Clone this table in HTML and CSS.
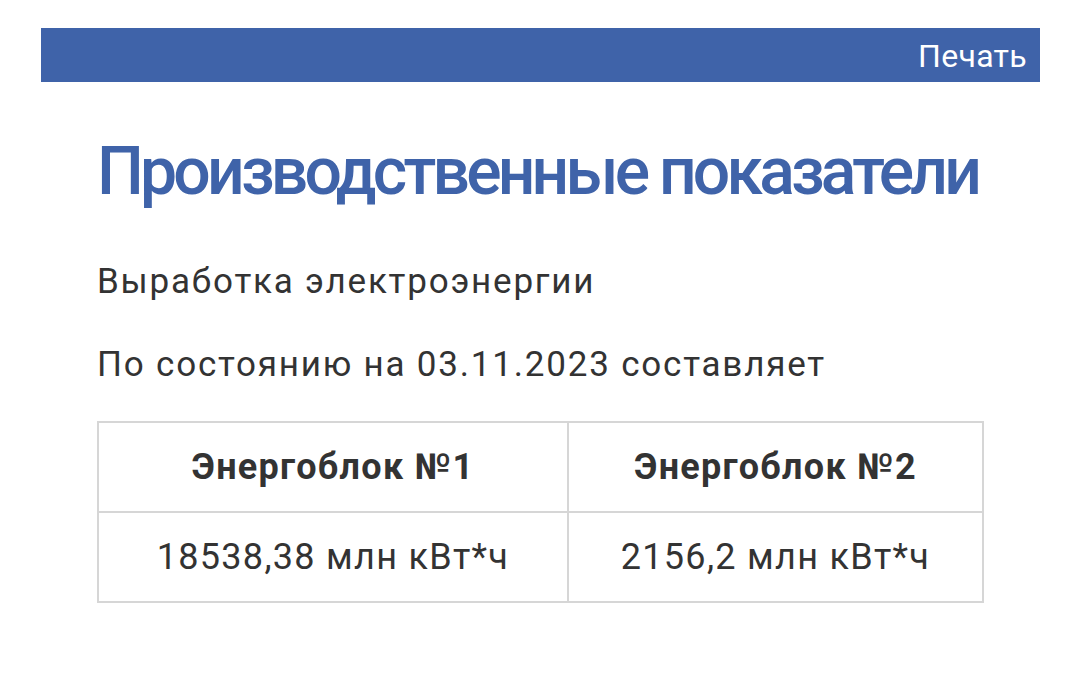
FILE: index.html
```html
<!DOCTYPE html>
<html lang="ru">
<head>
<meta charset="utf-8">
<title>Производственные показатели</title>
<link rel="stylesheet" href="styles.css">
</head>
<body>
<div class="page">
  <div class="toolbar"><a class="print" href="#">Печать</a></div>
  <main class="content">
    <h1 class="title">Производственные показатели</h1>
    <p class="text text-first">Выработка электроэнергии</p>
    <p class="text text-second">По состоянию на 03.11.2023 составляет</p>
    <table class="stats">
      <colgroup><col class="col-a"><col class="col-b"></colgroup>
      <tr><th>Энергоблок №1</th><th>Энергоблок №2</th></tr>
      <tr><td>18538,38 млн кВт*ч</td><td>2156,2 млн кВт*ч</td></tr>
    </table>
  </main>
</div>
</body>
</html>
```

FILE: styles.css
```css
html, body {
  margin: 0;
  padding: 0;
  background: #ffffff;
}
body {
  font-family: Roboto, "Noto Sans", Arial, sans-serif;
  color: #333333;
}
.page {
  padding: 28px 40px 0 41px;
}
.toolbar {
  height: 54px;
  background: #3f63a9;
  display: flex;
  justify-content: flex-end;
  align-items: center;
  padding-right: 13px;
}
.print {
  color: #ffffff;
  text-decoration: none;
  font-size: 32px;
  line-height: 40px;
  margin-top: 2px;
  letter-spacing: 0.3px;
}
.content {
  padding-left: 56px;
}
.title {
  margin: 50px 0 0 0;
  font-size: 66px;
  line-height: 80px;
  font-weight: 500;
  color: #3f63a9;
  letter-spacing: -3.8px;
  white-space: nowrap;
}
.text {
  margin: 0;
  font-size: 35px;
  line-height: 48px;
  letter-spacing: 1.8px;
}
.text-first {
  margin-top: 46px;
}
.text-second {
  margin-top: 35px;
}
.stats {
  margin-top: 32px;
  border-collapse: collapse;
  width: 887px;
  table-layout: fixed;
}
.col-a { width: 470px; }
.stats th, .stats td {
  border: 2px solid #d6d6d6;
  text-align: center;
  font-size: 36px;
  padding: 0;
  color: #333333;
  letter-spacing: 1.3px;
}
.stats th {
  height: 88px;
  font-weight: 700;
}
.stats td {
  height: 88px;
  font-weight: 400;
}
```
